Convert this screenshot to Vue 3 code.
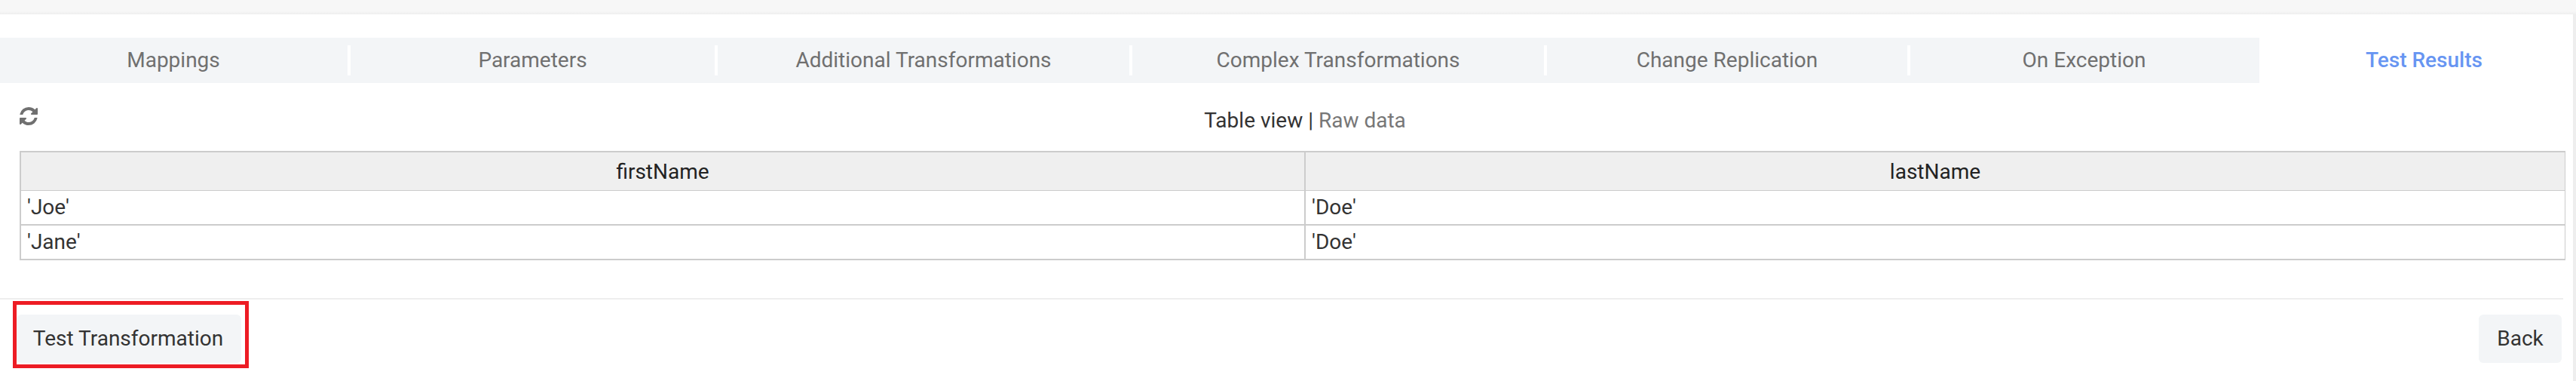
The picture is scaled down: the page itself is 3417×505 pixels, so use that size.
<script setup>
const tabs = [
  'Mappings',
  'Parameters',
  'Additional Transformations',
  'Complex Transformations',
  'Change Replication',
  'On Exception',
  'Test Results',
]
const activeTab = 'Test Results'
const columns = ['firstName', 'lastName']
const rows = [
  { firstName: "'Joe'", lastName: "'Doe'" },
  { firstName: "'Jane'", lastName: "'Doe'" },
]
</script>

<template>
  <div class="page">
    <div class="topbar"></div>
    <main class="panel">
      <nav class="tabs">
        <a v-for="tab in tabs" :key="tab" class="tab" :class="{ active: tab === activeTab }">{{ tab }}</a>
      </nav>
      <div class="toolbar">
        <svg class="refresh" viewBox="0 0 1536 1536">
          <path d="M1511 928q0 5-1 7-64 268-268 434.500t-478 166.500q-146 0-282.500-55t-243.500-157l-129 129q-19 19-45 19t-45-19-19-45v-448q0-26 19-45t45-19h448q26 0 45 19t19 45-19 45l-137 137q71 66 161 102t187 36q134 0 250-65t186-179q11-17 53-117 8-23 30-23h192q13 0 22.500 9.500t9.500 22.500zm25-800v448q0 26-19 45t-45 19h-448q-26 0-45-19t-19-45 19-45l138-138q-148-137-349-137-134 0-250 65t-186 179q-11 17-53 117-8 23-30 23h-199q-13 0-22.500-9.500t-9.500-22.500v-7q65-268 270-434.500t480-166.500q146 0 284 55.500t245 156.500l130-129q19-19 45-19t45 19 19 45z" />
        </svg>
        <div class="views"><span>Table view | </span><a class="raw">Raw data</a></div>
      </div>
      <div class="grid">
        <div class="row head">
          <div v-for="c in columns" :key="c" class="cell">{{ c }}</div>
        </div>
        <div v-for="(r, i) in rows" :key="i" class="row">
          <div v-for="c in columns" :key="c" class="cell">{{ r[c] }}</div>
        </div>
      </div>
      <footer class="actions">
        <div class="highlight"><button class="btn test">Test Transformation</button></div>
        <button class="btn back">Back</button>
      </footer>
    </main>
  </div>
</template>

<style>
body {
  margin: 0;
  background: #fff;
}
</style>

<style scoped>
.page {
  height: 505px;
  overflow: hidden;
  font-family: Roboto, 'Liberation Sans', sans-serif;
  font-size: 28px;
  line-height: 39px;
  color: #333;
  background: #eee;
}
.topbar {
  height: 19px;
  background: linear-gradient(#f7f7f7 0, #f7f7f7 15px, #eee 19px);
}
.panel {
  box-sizing: border-box;
  width: 3413px;
  height: 486px;
  padding-top: 31px;
  background: #fff;
  overflow: hidden;
}
.tabs {
  display: grid;
  grid-template-columns: 465px 487px 550px 550px 482px 463px 437px;
  height: 60px;
}
.tab {
  display: flex;
  align-items: flex-start;
  box-sizing: border-box;
  height: 60px;
  padding-top: 10px;
  background: #f3f5f7;
  color: #707070;
}
.tab::before {
  content: '';
  flex: 1;
}
.tab::after {
  content: '';
  box-sizing: border-box;
  flex: 1;
  height: 40px;
  border-right: 4px solid #fff;
}
.tab:first-child {
  margin-left: -1px;
}
.tab:nth-child(6) {
  padding-right: 2px;
}
.tab:nth-child(6)::after,
.tab.active::after {
  border: 0;
}
.tab.active {
  background: #fff;
  color: #6795f2;
  font-weight: 500;
}
.toolbar {
  display: grid;
  grid-template-columns: 24px 1fr;
  height: 90px;
  padding-left: 26px;
  box-sizing: border-box;
}
.refresh {
  width: 24px;
  height: 24px;
  margin-top: 32px;
  fill: #707070;
}
.views {
  margin-top: 30px;
  padding-right: 1px;
  text-align: center;
  white-space: pre;
}
.raw {
  color: #777;
}
.grid {
  box-sizing: border-box;
  width: 3377px;
  margin-left: 26px;
  border: 2px solid #ccc;
  border-width: 2px 1px 0 2px;
}
.row {
  display: grid;
  grid-template-columns: 1704px 1fr;
  box-sizing: border-box;
  height: 46px;
  border-bottom: 2px solid #ccc;
}
.row.head {
  height: 51px;
  border-bottom-width: 1px;
  background: #efefef;
  color: #222;
  text-align: center;
}
.cell {
  padding: 2px 8px;
}
.head .cell {
  padding-top: 6px;
}
.cell:first-child {
  border-right: 2px solid #ccc;
}
.actions {
  display: flex;
  justify-content: space-between;
  align-items: flex-start;
  box-sizing: border-box;
  width: 3400px;
  height: 100px;
  margin-top: 50px;
  padding: 2px 2px 0 17px;
  border-top: 2px solid #eee;
}
.highlight {
  box-sizing: border-box;
  width: 313px;
  height: 89px;
  padding-top: 13px;
  border: 5px solid #ed1c24;
}
.btn {
  display: block;
  box-sizing: border-box;
  height: 64px;
  padding: 12px 0 13px;
  border: 0;
  border-radius: 6px;
  background: #f3f5f7;
  color: #333;
  font: inherit;
  text-align: center;
}
.test {
  width: 298px;
  padding-right: 2px;
}
.back {
  width: 110px;
  margin-top: 18px;
}
</style>
